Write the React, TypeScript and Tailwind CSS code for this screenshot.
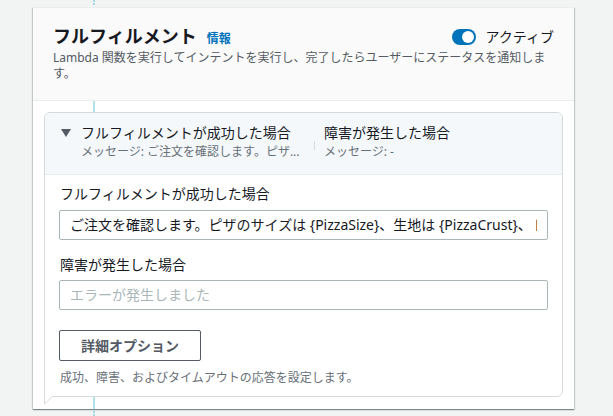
import React from "react";

export default function App() {
  return (
    <div className="relative min-h-[416px] w-full bg-[#f2f3f3] pt-[7px] pl-[33px] font-['Noto_Sans','Noto_Sans_CJK_JP',sans-serif] text-[#16191f]">
      {/* connector line behind the card */}
      <div className="absolute left-[93px] top-0 bottom-0 w-0 border-l-2 border-dotted border-[#a4d9e3]" />

      <div className="relative z-10 w-[541px] bg-white border-t border-[#eaeded] shadow-[0_1px_1px_0_rgba(0,28,36,0.3),1px_1px_1px_0_rgba(0,28,36,0.15),-1px_1px_1px_0_rgba(0,28,36,0.15)]">
        {/* header */}
        <div className="bg-[#fafafa] border-b border-[#eaeded] px-[20px] pt-[17px] pb-[18px]">
          <div className="flex h-[22px] items-start justify-between">
            <div className="flex h-[22px] items-baseline">
              <h2 className="text-[18px] leading-[22px] font-bold text-[#16191f]">フルフィルメント</h2>
              <span className="ml-[10px] text-[12px] leading-[22px] font-bold text-[#0073bb]">情報</span>
            </div>
            <div className="mt-[2px] flex h-5 items-center">
              <div className="relative h-4 w-6 rounded-full bg-[#0073bb]">
                <div className="absolute right-[2px] top-[2px] h-3 w-3 rounded-full bg-white" />
              </div>
              <span className="ml-[10px] text-[14px] leading-5 text-[#16191f]">アクティブ</span>
            </div>
          </div>
          <p className="mt-[3px] h-[32px] max-w-[496px] text-[12px] leading-4 text-[#545b64]">
            Lambda 関数を実行してインテントを実行し、完了したらユーザーにステータスを通知します。
          </p>
        </div>

        {/* body */}
        <div className="relative px-[11px] pt-[11px] pb-[12px]">
          <div className="absolute left-[60px] top-0 bottom-0 w-[2px] bg-[#b3e0e8]" />
          <div className="relative z-10 rounded-[6px] rounded-bl-none border border-[#d5dbdb] bg-white">
            {/* expandable header */}
            <div className="flex items-start rounded-t-[6px] border-b border-[#eaeded] bg-[#f4f8fb] pl-[16px] pt-[10px] pb-[13px]">
              <div className="flex h-5 w-[20px] items-center">
                <svg width="10" height="8" viewBox="0 0 10 8">
                  <path d="M0 0 H10 L5 8 Z" fill="#545b64" />
                </svg>
              </div>
              <div className="w-[224px]">
                <div className="h-5 text-[14px] leading-5 text-[#16191f]">フルフィルメントが成功した場合</div>
                <div className="h-[18px] whitespace-nowrap text-[12px] leading-[18px] text-[#687078]">
                  メッセージ: ご注文を確認します。ピザ...
                </div>
              </div>
              <div className="ml-[9px] mt-[18px] h-[9px] w-px bg-[#d5dbdb]" />
              <div className="ml-[9px]">
                <div className="h-5 text-[14px] leading-5 text-[#16191f]">障害が発生した場合</div>
                <div className="h-[18px] text-[12px] leading-[18px] text-[#687078]">メッセージ: -</div>
              </div>
            </div>

            {/* content */}
            <div className="px-[14px] pt-[9px] pb-[10px]">
              <div className="h-5 pl-px text-[14px] leading-5 text-[#16191f]">フルフィルメントが成功した場合</div>
              <div className="mt-[6px] flex h-[30px] items-center rounded-[2px] border border-[#aab7b8] bg-white px-[10px]">
                <div className="h-5 overflow-hidden whitespace-nowrap text-[14px] leading-5 text-[#16191f]">
                  ご注文を確認します。ピザのサイズは {"{PizzaSize}"}、生地は {"{PizzaCrust}"}、トッピングは {"{PizzaTopping}"} です。
                </div>
              </div>

              <div className="mt-[15px] h-5 pl-px text-[14px] leading-5 text-[#16191f]">障害が発生した場合</div>
              <div className="mt-[5px] flex h-[30px] items-center rounded-[2px] border border-[#aab7b8] bg-white px-[10px]">
                <div className="h-5 overflow-hidden whitespace-nowrap text-[14px] leading-5 text-[#aab7b8]">エラーが発生しました</div>
              </div>

              <button className="mt-[20px] flex h-[31px] items-center rounded-[2px] border border-[#545b64] bg-white px-[21px] text-[14px] font-bold leading-5 text-[#545b64]">
                詳細オプション
              </button>

              <div className="mt-[9px] h-4 pl-px text-[12px] leading-4 text-[#687078]">
                成功、障害、およびタイムアウトの応答を設定します。
              </div>
            </div>

            {/* speech bubble tail */}
            <svg className="absolute -left-px -bottom-[9px]" width="12" height="9" viewBox="0 0 12 9">
              <path d="M0 0 H10 L0.5 8.5 Z" fill="#ffffff" />
              <path d="M0.5 0 V8 L8.5 0.5 H12" fill="none" stroke="#d5dbdb" strokeWidth="1" />
            </svg>
          </div>
        </div>
      </div>
    </div>
  );
}
